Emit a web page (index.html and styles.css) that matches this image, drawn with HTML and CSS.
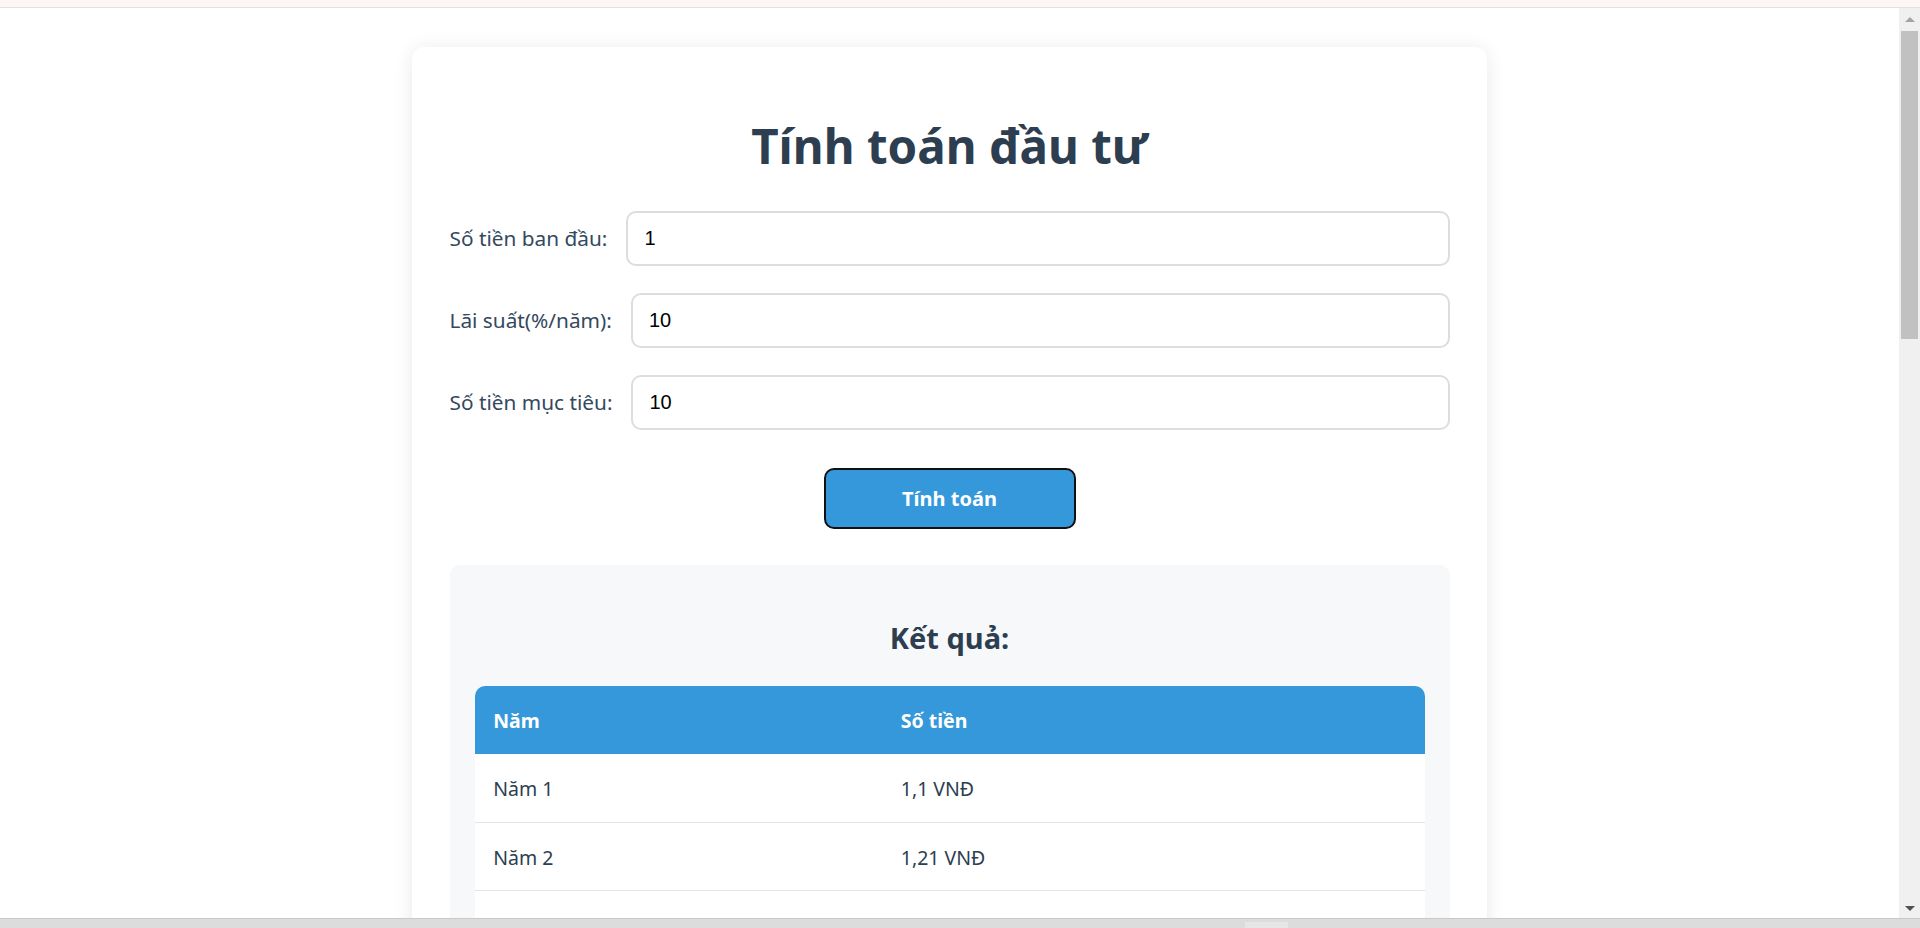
FILE: index.html
```html
<!DOCTYPE html>
<html lang="vi">
<head>
<meta charset="utf-8">
<title>Tính toán đầu tư</title>
<link rel="stylesheet" href="styles.css">
</head>
<body>
<div class="screen">
  <div class="topstrip"></div>
  <div class="middle">
    <div class="viewport">
      <div class="card">
        <h1 class="title">Tính toán đầu tư</h1>
        <div class="row">
          <label class="label">Số tiền ban đầu:</label>
          <input class="field" type="text" value="1">
        </div>
        <div class="row">
          <label class="label">Lãi suất(%/năm):</label>
          <input class="field" type="text" value="10">
        </div>
        <div class="row">
          <label class="label">Số tiền mục tiêu:</label>
          <input class="field" type="text" value="10">
        </div>
        <div class="actions">
          <button class="btn" type="button">Tính toán</button>
        </div>
        <div class="results">
          <h3 class="results-title">Kết quả:</h3>
          <table class="table">
            <thead>
              <tr><th class="col-year">Năm</th><th>Số tiền</th></tr>
            </thead>
            <tbody>
              <tr><td>Năm 1</td><td>1,1 VNĐ</td></tr>
              <tr><td>Năm 2</td><td>1,21 VNĐ</td></tr>
              <tr><td>Năm 3</td><td>1,331 VNĐ</td></tr>
              <tr><td>Năm 4</td><td>1,4641 VNĐ</td></tr>
            </tbody>
          </table>
        </div>
      </div>
    </div>
    <div class="vscroll">
      <div class="arrow-up"></div>
      <div class="thumb"></div>
      <div class="track-rest"></div>
      <div class="arrow-down"></div>
    </div>
  </div>
  <div class="hbar"><div class="hbar-mark"></div></div>
</div>
</body>
</html>
```

FILE: styles.css
```css
html, body {
  margin: 0;
  padding: 0;
  overflow: hidden;
  background: #ffffff;
}

.screen {
  width: 1920px;
  height: 928px;
  display: flex;
  flex-direction: column;
  font-family: "Noto Sans", "Open Sans", sans-serif;
}

.topstrip {
  height: 7px;
  flex: 0 0 auto;
  background: #fcf6f7;
  border-bottom: 1px solid #e4e0e1;
}

.middle {
  flex: 1 1 auto;
  display: flex;
  min-height: 0;
}

.viewport {
  flex: 1 1 auto;
  overflow: hidden;
  background: #ffffff;
}

.card {
  box-sizing: border-box;
  width: 1075px;
  margin: 39px auto 0;
  padding: 37.5px 37.5px 37.5px;
  background: #ffffff;
  border-radius: 12px;
  box-shadow: 0 2px 20px rgba(0, 0, 0, 0.09);
}

.title {
  margin: 31px 0 35px;
  font-size: 47.5px;
  line-height: 60px;
  font-weight: 700;
  color: #2c3e50;
  text-align: center;
}

.row {
  display: flex;
  align-items: center;
  margin-bottom: 27px;
}

.label {
  flex: 0 0 auto;
  margin-right: 19px;
  font-size: 20.8px;
  color: #34495e;
}

.field {
  flex: 1 1 auto;
  box-sizing: border-box;
  height: 55px;
  padding: 0 16px;
  border: 2px solid #dddddd;
  border-radius: 10px;
  font-family: "Liberation Sans", Arial, sans-serif;
  font-size: 20px;
  color: #000000;
  background: #ffffff;
  outline: none;
}

.actions {
  display: flex;
  justify-content: center;
  margin-top: 38px;
}

.btn {
  box-sizing: border-box;
  width: 252px;
  height: 61px;
  border: 2px solid #111111;
  border-radius: 10px;
  background: #3498db;
  color: #ffffff;
  font-family: "Noto Sans", "Open Sans", sans-serif;
  font-size: 20px;
  font-weight: 700;
}

.results {
  margin-top: 36px;
  padding: 25px 25px 25px;
  background: #f7f8fa;
  border-radius: 10px;
}

.results-title {
  margin: 30px 0 30px;
  font-size: 29px;
  line-height: 36px;
  font-weight: 700;
  color: #2c3e50;
  text-align: center;
}

.table {
  width: 100%;
  border-collapse: separate;
  border-spacing: 0;
  background: #ffffff;
  border-radius: 10px;
  overflow: hidden;
  font-size: 19.5px;
  color: #2c3e50;
}

.table th {
  background: #3498db;
  color: #ffffff;
  font-weight: 700;
  text-align: left;
  padding: 21px 18.75px 20.5px;
  line-height: 27px;
}

.col-year {
  width: 370px;
}

.table td {
  padding: 21px 18.75px 19.5px;
  line-height: 27px;
  border-bottom: 1px solid #e2e4e6;
}

.vscroll {
  flex: 0 0 21px;
  display: flex;
  flex-direction: column;
  align-items: center;
  background: #f0f0f0;
}

.arrow-up {
  margin-top: 9px;
  width: 0;
  height: 0;
  border-left: 5px solid transparent;
  border-right: 5px solid transparent;
  border-bottom: 5px solid #a3a3a3;
}

.thumb {
  margin-top: 9px;
  width: 17px;
  height: 308px;
  background: #c1c1c1;
}

.track-rest {
  flex: 1 1 auto;
}

.arrow-down {
  margin-bottom: 7px;
  width: 0;
  height: 0;
  border-left: 5px solid transparent;
  border-right: 5px solid transparent;
  border-top: 5px solid #505050;
}

.hbar {
  flex: 0 0 auto;
  height: 9px;
  display: flex;
  align-items: flex-end;
  background: #dcdcdc;
  border-top: 1px solid #c9c9c9;
}

.hbar-mark {
  margin-left: 1245px;
  width: 43px;
  height: 6px;
  background: #e6e6e6;
}
```
